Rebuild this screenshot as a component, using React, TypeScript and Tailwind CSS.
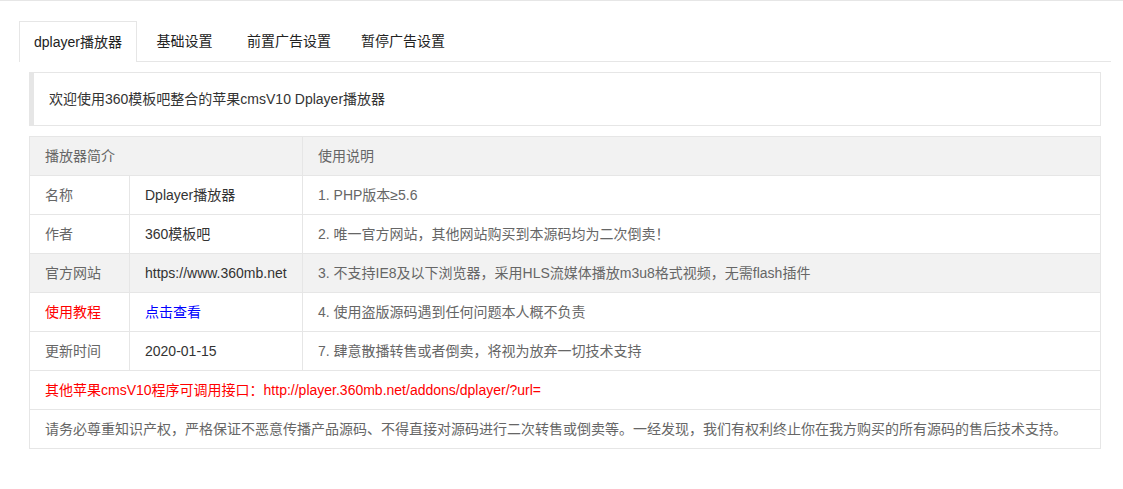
import React from "react";

const tabs = ["dplayer播放器", "基础设置", "前置广告设置", "暂停广告设置"];

const rows = [
  { label: "名称", value: "Dplayer播放器", note: "1. PHP版本≥5.6" },
  { label: "作者", value: "360模板吧", note: "2. 唯一官方网站，其他网站购买到本源码均为二次倒卖！" },
  {
    label: "官方网站",
    value: "https://www.360mb.net",
    note: "3. 不支持IE8及以下浏览器，采用HLS流媒体播放m3u8格式视频，无需flash插件",
    hover: true,
  },
  { label: "使用教程", value: "点击查看", note: "4. 使用盗版源码遇到任何问题本人概不负责", red: true },
  { label: "更新时间", value: "2020-01-15", note: "7. 肆意散播转售或者倒卖，将视为放弃一切技术支持" },
];

export default function App() {
  return (
    <div
      className="min-h-[489px] w-full bg-white border-t border-[#e6e6e6] text-[14px] text-[#666]"
      style={{ fontFamily: '"Liberation Sans", Arial, "Noto Sans CJK SC", sans-serif' }}
    >
      <div className="pt-5 pl-[19px] w-[1111px]">
        {/* 탭 */}
        <ul className="flex h-[41px] border-b border-[#e6e6e6]">
          {tabs.map((t, i) => (
            <li
              key={t}
              className={
                "h-[41px] leading-[40px] text-center text-[#222] whitespace-nowrap " +
                (i === 0
                  ? "border border-b-0 border-[#e6e6e6] bg-white -mb-px px-[14px] min-w-[95px]"
                  : "px-[15px] min-w-[95px]")
              }
            >
              {t}
            </li>
          ))}
        </ul>

        {/* 내용 */}
        <div className="px-[10px] pt-[10px]">
          <div className="border border-[#e6e6e6] border-l-[5px] px-[15px] py-[15px] leading-[22px] text-[#333] mb-[10px]">
            欢迎使用360模板吧整合的苹果cmsV10 Dplayer播放器
          </div>

          <table className="w-[1072px] border-collapse table-fixed">
            <colgroup>
              <col className="w-[100px]" />
              <col className="w-[173px]" />
              <col />
            </colgroup>
            <thead>
              <tr className="bg-[#f2f2f2]">
                <th colSpan={2} className="border border-[#e6e6e6] px-[15px] py-[9px] leading-[20px] text-left font-normal">
                  播放器简介
                </th>
                <th className="border border-[#e6e6e6] px-[15px] py-[9px] leading-[20px] text-left font-normal">
                  使用说明
                </th>
              </tr>
            </thead>
            <tbody>
              {rows.map((r) => (
                <tr key={r.label} className={r.hover ? "bg-[#f2f2f2]" : ""}>
                  <td
                    className={
                      "border border-[#e6e6e6] px-[15px] py-[9px] leading-[20px] " +
                      (r.red ? "text-[#ff0000]" : "")
                    }
                  >
                    {r.label}
                  </td>
                  <td
                    className={
                      "border border-[#e6e6e6] px-[15px] py-[9px] leading-[20px] " +
                      (r.red ? "text-[#0000ff]" : "text-[#333]")
                    }
                  >
                    {r.value}
                  </td>
                  <td className="border border-[#e6e6e6] px-[15px] py-[9px] leading-[20px]">{r.note}</td>
                </tr>
              ))}
              <tr>
                <td colSpan={3} className="border border-[#e6e6e6] px-[15px] py-[9px] leading-[20px] text-[#ff0000]">
                  其他苹果cmsV10程序可调用接口：http://player.360mb.net/addons/dplayer/?url=
                </td>
              </tr>
              <tr>
                <td colSpan={3} className="border border-[#e6e6e6] px-[15px] py-[9px] leading-[20px]">
                  请务必尊重知识产权，严格保证不恶意传播产品源码、不得直接对源码进行二次转售或倒卖等。一经发现，我们有权利终止你在我方购买的所有源码的售后技术支持。
                </td>
              </tr>
            </tbody>
          </table>
        </div>
      </div>
    </div>
  );
}
